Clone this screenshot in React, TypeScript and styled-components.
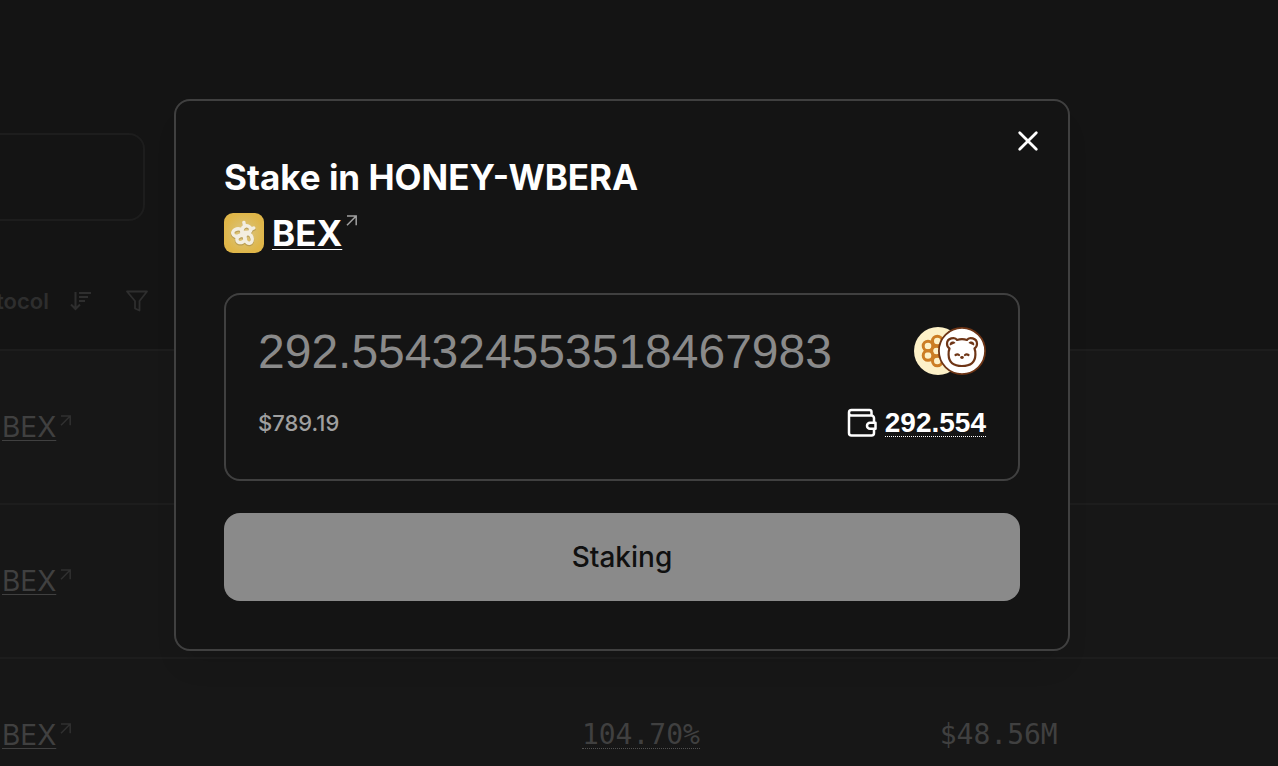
import React from "react";
import styled, { createGlobalStyle } from "styled-components";

const sans = `"Liberation Sans", Arial, sans-serif`;
const inter = `Inter, "Liberation Sans", sans-serif`;
const mono = `"DejaVu Sans Mono", monospace`;

const GlobalStyle = createGlobalStyle`
  *, *::before, *::after { box-sizing: border-box; }
  html, body, #root { height: 100%; }
  body {
    margin: 0;
    overflow: hidden;
    background: #141414;
    color: #ffffff;
    font-family: ${inter};
    -webkit-font-smoothing: antialiased;
  }
  h2, p { margin: 0; }
`;

const Page = styled.div`
  position: relative;
  height: 100%;
  overflow: hidden;
`;

const Market = styled.main`
  padding-top: 133px;
`;

const SearchBox = styled.input`
  display: block;
  width: 165px;
  height: 88px;
  margin: 0 0 32px -20px;
  border: 2px solid #1d1d1d;
  border-radius: 16px;
  background: transparent;
  color: #404040;
`;

const Table = styled.table`
  width: 100%;
  table-layout: fixed;
  border-collapse: separate;
  border-spacing: 0;
  color: #404040;
`;

const HeadCell = styled.th<{ $width?: string }>`
  width: ${(p) => p.$width ?? "auto"};
  height: 98px;
  padding: 0;
  border-bottom: 2px solid #1d1d1d;
  text-align: left;
`;

const HeadContent = styled.div`
  display: flex;
  align-items: center;
  margin-left: -46px;
  color: #2e2e2e;
  font: 600 22px/32px ${inter};
`;

const HeadLabel = styled.span`
  width: 95px;
  text-align: right;
`;

const IconButton = styled.button<{ $gap: number }>`
  display: flex;
  margin: 0 0 0 ${(p) => p.$gap}px;
  padding: 0;
  border: 0;
  background: transparent;
  color: inherit;
`;

const Cell = styled.td<{ $numeric?: boolean }>`
  height: 154px;
  padding: 0 3px 0 2px;
  border-bottom: 2px solid #1d1d1d;
  background: #171717;
  font: 400 28px/32px ${(p) => (p.$numeric ? mono : inter)};
  text-align: ${(p) => (p.$numeric ? "right" : "left")};
`;

const Dotted = styled.span`
  border-bottom: 1px dotted #505050;
  display: inline-block;
  line-height: 26px;
`;

const ProtocolLink = styled.a<{ $large?: boolean }>`
  display: inline-flex;
  align-items: flex-start;
  gap: 4px;
  color: inherit;
  text-decoration: none;
  font-size: ${(p) => (p.$large ? 35 : 28)}px;
  font-weight: ${(p) => (p.$large ? 700 : 400)};
  line-height: ${(p) => (p.$large ? 40 : 32)}px;

  span {
    text-decoration: underline;
    text-decoration-thickness: 1px;
    text-underline-offset: 3px;
  }
  svg {
    flex: none;
    margin-top: ${(p) => (p.$large ? 2 : 4)}px;
    color: ${(p) => (p.$large ? "#a0a0a0" : "#303030")};
  }
`;

const Overlay = styled.div`
  position: absolute;
  inset: 0;
  display: flex;
  align-items: center;
  justify-content: center;
  padding: 0 34px 16px 0;
`;

const Dialog = styled.section`
  position: relative;
  width: 90%;
  max-width: 896px;
  padding: 52px 48px 48px;
  border: 2px solid #404040;
  border-radius: 16px;
  background: #141414;
  box-shadow: 0 20px 30px -10px rgba(0, 0, 0, 0.1);
`;

const CloseButton = styled.button`
  position: absolute;
  top: 24px;
  right: 24px;
  display: flex;
  padding: 0;
  border: 0;
  background: transparent;
  color: #ffffff;
`;

const Title = styled.h2`
  font-size: 35px;
  font-weight: 700;
  line-height: 48px;
`;

const ProtocolRow = styled.div`
  display: flex;
  align-items: center;
  gap: 8px;
  margin: 12px 0 40px;
`;

const AmountCard = styled.div`
  display: flex;
  flex-direction: column;
  gap: 32px;
  padding: 32px 32px 40px;
  border: 2px solid #404040;
  border-radius: 16px;
`;

const AmountRow = styled.div`
  display: flex;
  align-items: center;
  justify-content: space-between;
`;

const AmountInput = styled.input`
  flex: 1;
  min-width: 0;
  height: 48px;
  padding: 0;
  border: 0;
  outline: 0;
  background: transparent;
  color: #8a8a8a;
  font: 400 48px/48px ${sans};
`;

const FiatValue = styled.p`
  color: #a0a0a0;
  font-size: 22px;
  font-weight: 500;
  line-height: 32px;
`;

const BalanceButton = styled.button`
  display: flex;
  align-items: center;
  gap: 8px;
  padding: 0;
  border: 0;
  background: transparent;
  color: #ffffff;
  font: 700 28px/26px ${sans};

  span { border-bottom: 1px dotted #ffffff; }
`;

const SubmitButton = styled.button`
  display: block;
  width: 100%;
  height: 88px;
  margin-top: 32px;
  border: 0;
  border-radius: 16px;
  background: #8a8a8a;
  color: #101010;
  font: 500 28px/40px ${inter};
`;

const ArrowIcon = () => (
  <svg width="12" height="12" viewBox="0 0 12 12" fill="none" stroke="currentColor" strokeWidth="1.5">
    <path d="M1 1h9.200v9.200M10.200 1 1 10.200" />
  </svg>
);

const SortIcon = () => (
  <svg width="22" height="22" viewBox="0 0 22 22" fill="none" stroke="currentColor" strokeWidth="2">
    <path d="M5.500 2v17M1 14.500 5.500 19 10 14.500M9 3h12M9 7h9M9 11h6" />
  </svg>
);

const FilterIcon = () => (
  <svg width="24" height="24" viewBox="0 0 24 24" fill="none" stroke="currentColor" strokeWidth="1.8" strokeLinejoin="round">
    <path d="M2 2.500h20l-7.500 9.500v9.500l-4.500-2v-7.500z" />
  </svg>
);

const CloseIcon = () => (
  <svg width="32" height="32" viewBox="0 0 32 32" fill="none" stroke="currentColor" strokeWidth="2.8" strokeLinecap="round">
    <path d="m7.700 7.700 16.600 16.600m0-16.600-16.600 16.600" />
  </svg>
);

const WalletIcon = () => (
  <svg width="30" height="30" viewBox="0 0 30 30" fill="none" stroke="currentColor" strokeWidth="2.500" strokeLinejoin="round">
    <path d="M24.500 7.600V4a2 2 0 0 0-2-2H4.500A2.500 2.500 0 0 0 2 4.500v20.500A2.500 2.500 0 0 0 4.500 27.500H24.500a2.500 2.500 0 0 0 2.500-2.500V21M2 5A2.600 2.600 0 0 0 4.600 7.600H24.500a2.500 2.500 0 0 1 2.500 2.500V14.500" />
    <path d="M28.500 14.800h-5.500a3 3 0 0 0 0 6h5.500z" />
  </svg>
);

const BexLogo = () => (
  <svg width="40" height="40" viewBox="0 0 40 40" aria-hidden="true">
    <defs>
      <radialGradient id="bexGlow">
        <stop offset="0" stopColor="#dcc88c" />
        <stop offset="0.6" stopColor="#dcbc60" />
        <stop offset="1" stopColor="#dfb649" />
      </radialGradient>
      <g id="bexMark" fill="none" strokeLinecap="round" strokeLinejoin="round">
        <ellipse cx="13.500" cy="19.500" rx="4.800" ry="3.600" transform="rotate(-14 13.500 19.500)" />
        <ellipse cx="17" cy="26" rx="4.300" ry="3.400" transform="rotate(-25 17 26)" />
        <ellipse cx="24.500" cy="25.500" rx="3.600" ry="4.800" transform="rotate(-18 24.500 25.500)" />
        <path d="M18.500 22.500c-1-4-.5-8 2-9.200 3-1.300 6.500.7 6.300 3.500-.2 2.200-2.500 3-6.300 2.700" />
        <path d="m20.500 13-.6-3.500M26.500 16.500l3.200-1.500" />
      </g>
    </defs>
    <rect width="40" height="40" rx="9" fill="#dfb649" />
    <circle cx="20" cy="20" r="20" fill="url(#bexGlow)" />
    <use href="#bexMark" y="1" stroke="#a58a48" strokeWidth="4" opacity=".6" />
    <use href="#bexMark" stroke="#f3eee0" strokeWidth="3.500" />
  </svg>
);

const TokenPair = () => (
  <svg width="72" height="48" viewBox="0 0 72 48" aria-hidden="true">
    <circle cx="24" cy="24" r="24" fill="#fdf1c8" />
    <g fill="none" stroke="#cc7d24" strokeWidth="3">
      <circle cx="14" cy="19" r="4.800" />
      <circle cx="14" cy="28.500" r="4.800" />
      <circle cx="23.300" cy="14" r="4.800" />
      <circle cx="22.500" cy="24" r="4.800" />
      <circle cx="23.300" cy="34" r="4.800" />
    </g>
    <circle cx="48" cy="24" r="23.100" fill="#ffffff" stroke="#6e3516" strokeWidth="1.800" />
    <g fill="none" stroke="#6e3516" strokeWidth="2.200" strokeLinecap="round" strokeLinejoin="round">
      <path d="M43 13c-2-3.500-10-2-10 3.800 0 2.200 1 3.800 2.500 4.700-.8 2-1 4-.9 6.200.2 7.300 5 11.300 13.400 11.300s13.200-4 13.400-11.300c.1-2.200-.1-4.200-.9-6.200 1.500-.9 2.500-2.500 2.500-4.700 0-5.800-8-7.300-10-3.800-3-1-7-1-10 0z" />
      <path d="M41.500 28c1.200-.8 2.500-.8 3.500 0M54.500 28c-1.200-.8-2.500-.8-3.500 0" />
    </g>
    <path d="M36 18.500c-1.500-3.500 3.500-5.500 5.500-2.500zM60 18.500c1.500-3.500-3.500-5.500-5.500-2.500z" fill="#6e3516" />
    <ellipse cx="48" cy="30.500" rx="1.800" ry="1.400" fill="#6e3516" />
  </svg>
);

const rows = [
  { apr: "", tvl: "" },
  { apr: "", tvl: "" },
  { apr: "104.70%", tvl: "$48.56M" },
];

export default function App() {
  return (
    <Page>
      <GlobalStyle />
      <Market>
        <SearchBox aria-label="Search markets" />
        <Table>
          <thead>
            <tr>
              <HeadCell scope="col" $width="25%">
                <HeadContent>
                  <HeadLabel>Protocol</HeadLabel>
                  <IconButton $gap={21} aria-label="Sort"><SortIcon /></IconButton>
                  <IconButton $gap={33} aria-label="Filter"><FilterIcon /></IconButton>
                </HeadContent>
              </HeadCell>
              <HeadCell $width="30%" />
              <HeadCell $width="28%" />
              <HeadCell />
            </tr>
          </thead>
          <tbody>
            {rows.map((row, i) => (
              <tr key={i}>
                <Cell>
                  <ProtocolLink href="#bex"><span>BEX</span><ArrowIcon /></ProtocolLink>
                </Cell>
                <Cell $numeric>{row.apr && <Dotted>{row.apr}</Dotted>}</Cell>
                <Cell $numeric>{row.tvl}</Cell>
                <Cell />
              </tr>
            ))}
          </tbody>
        </Table>
      </Market>
      <Overlay>
        <Dialog role="dialog" aria-modal="true" aria-labelledby="stake-title">
          <CloseButton aria-label="Close"><CloseIcon /></CloseButton>
          <Title id="stake-title">Stake in HONEY-WBERA</Title>
          <ProtocolRow>
            <BexLogo />
            <ProtocolLink $large href="#bex"><span>BEX</span><ArrowIcon /></ProtocolLink>
          </ProtocolRow>
          <AmountCard>
            <AmountRow>
              <AmountInput aria-label="Amount to stake" defaultValue="292.554324553518467983" />
              <TokenPair />
            </AmountRow>
            <AmountRow>
              <FiatValue>$789.19</FiatValue>
              <BalanceButton><WalletIcon /><span>292.554</span></BalanceButton>
            </AmountRow>
          </AmountCard>
          <SubmitButton>Staking</SubmitButton>
        </Dialog>
      </Overlay>
    </Page>
  );
}
